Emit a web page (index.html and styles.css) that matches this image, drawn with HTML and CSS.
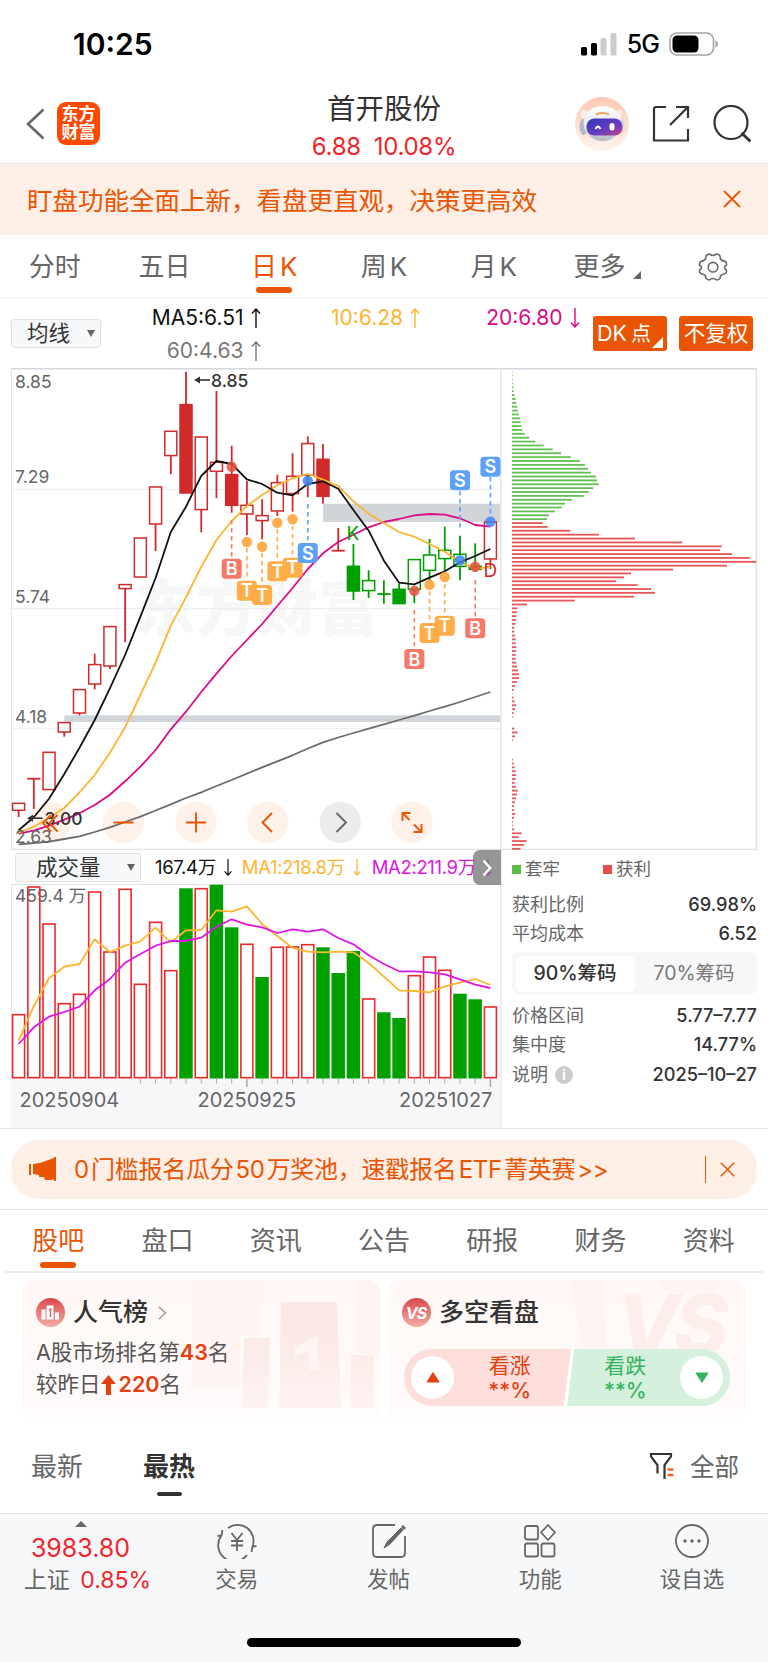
FILE: index.html
```html
<!DOCTYPE html>
<html lang="zh-CN">
<head>
  <meta charset="UTF-8">
  <title>首开股份</title>
  <link rel="stylesheet" href="styles.css">
</head>
<body>
  <svg width="0" height="0" class="defs">
    <symbol id="up" viewBox="0 0 10 20"><path d="M5 20V1M1 5.5L5 1l4 4.5" fill="none" stroke="currentColor" stroke-width="1.4"/></symbol>
    <symbol id="down" viewBox="0 0 10 20"><path d="M5 0v19M1 14.5L5 19l4-4.5" fill="none" stroke="currentColor" stroke-width="1.4"/></symbol>
    <symbol id="close" viewBox="0 0 18 18"><path d="M1 1l16 16M17 1L1 17" fill="none" stroke="currentColor" stroke-width="1.8"/></symbol>
  </svg>

  <div class="status">
    <span class="time">10:25</span>
    <div class="signal">
      <svg width="36" height="23" viewBox="0 0 36 23">
        <rect x="0" y="14" width="6" height="8.5" rx="1.5"/>
        <rect x="10" y="10" width="6" height="12.5" rx="1.5"/>
        <rect x="19.500" y="5" width="6" height="17.500" rx="1.5" fill="#ccc"/>
        <rect x="29.500" y="0" width="6" height="22.500" rx="1.5" fill="#ccc"/>
      </svg>
      <span class="net">5G</span>
      <svg width="50" height="24" viewBox="0 0 50 24">
        <rect x="1" y="1" width="43.500" height="22" rx="7" fill="none" stroke="#a5a5a5" stroke-width="1.6"/>
        <rect x="3.500" y="3.500" width="26" height="17" rx="4.500"/>
        <path d="M46.500 8q2.500 1.500 2.500 4t-2.500 4z" fill="#a5a5a5"/>
      </svg>
    </div>
  </div>

  <div class="header">
    <div class="header-left">
      <svg width="19" height="32" viewBox="0 0 19 32"><path d="M17.500 1.500L2 16l15.500 14.500" fill="none" stroke="#666" stroke-width="2.600"/></svg>
      <div class="logo">东方<br>财富</div>
    </div>
    <div class="stock">
      <div class="name">首开股份</div>
      <div class="price"><span>6.88</span><span>10.08%</span></div>
    </div>
    <div class="header-right">
      <svg width="54" height="54" viewBox="0 0 54 54">
        <defs>
          <linearGradient id="rb" x1="0" y1="0" x2="0" y2="1"><stop offset="0" stop-color="#fdc9b2"/><stop offset="1" stop-color="#fff3ec"/></linearGradient>
          <linearGradient id="rf" x1="0" y1="0" x2="1" y2="1"><stop offset="0" stop-color="#2b3bb5"/><stop offset=".6" stop-color="#6a3cc0"/><stop offset="1" stop-color="#d0407a"/></linearGradient>
          <linearGradient id="rh" x1="0" y1="0" x2="0" y2="1"><stop offset="0" stop-color="#fff"/><stop offset=".6" stop-color="#e6e6ec"/><stop offset="1" stop-color="#b4b8c6"/></linearGradient>
        </defs>
        <circle cx="27" cy="27" r="27" fill="url(#rb)"/>
        <path d="M7.500 12q-3 5 1 10l7-8q-6 1-8-2zM45.500 12q3 5-1 10l-7-8q6 1 8-2z" fill="#f6efed"/>
        <ellipse cx="8.500" cy="30" rx="4" ry="8" fill="#b3b7c6"/>
        <ellipse cx="46" cy="29" rx="3.500" ry="7" fill="#d5d7e0"/>
        <ellipse cx="27.500" cy="26.500" rx="19" ry="17.500" fill="url(#rh)"/>
        <path d="M21 17.500q6-3 13 0" fill="none" stroke="#eea468" stroke-width="2.200"/>
        <rect x="11.500" y="21.500" width="36" height="17" rx="8" fill="url(#rf)"/>
        <path d="M20.500 32q2.500-5 5 0" fill="none" stroke="#fff" stroke-width="1.800"/>
        <rect x="34.500" y="26" width="5" height="7.500" rx="2.500" fill="#fff"/>
      </svg>
      <svg width="38" height="38" viewBox="0 0 38 38"><path d="M14 2H4q-2 0-2 2v31.500h34V24M24 2h12v11M36 2L18 20" fill="none" stroke="#333" stroke-width="2.200"/></svg>
      <svg width="38" height="38" viewBox="0 0 38 38"><circle cx="18" cy="17.500" r="16.500" fill="none" stroke="#333" stroke-width="2.200"/><path d="M28.500 28l9 8.500" stroke="#333" stroke-width="2.800"/></svg>
    </div>
  </div>

  <div class="notice">
    <span>盯盘功能全面上新，看盘更直观，决策更高效</span>
    <svg width="18" height="18"><use href="#close"/></svg>
  </div>

  <div class="tabs period">
    <div>分时</div>
    <div>五日</div>
    <div class="active">日<b>K</b></div>
    <div>周<b>K</b></div>
    <div>月<b>K</b></div>
    <div>更多<i class="corner"></i></div>
    <div>
      <svg width="30" height="28" viewBox="0 0 30 28"><path d="M8 3q1.500-2 3.500-2 2 1.500 3.500 1.500T18.500 1Q20.500 1 22 3q0 3 1.500 4T27.500 8.500q1.200 1.500 1 3.500-2 1-2 2.500t2 2.500q.2 2-1 3.500-2.500.5-4 1.500T22 25.500q-1.500 1.500-3.500 1.500-1.500-1.500-3.500-1.500T11.500 27Q9.500 27 8 25.500 8 23 6.500 22t-4-1.500q-1.200-1.500-1-3.500 2-1 2-2.500t-2-2.500q-.2-2 1-3.500Q5 8 6.500 7T8 3z" fill="none" stroke="#666" stroke-width="1.600"/><circle cx="15" cy="14.200" r="4.800" fill="none" stroke="#666" stroke-width="1.600"/></svg>
    </div>
  </div>

  <div class="ma-row">
    <div class="select ma-select">均线<i></i></div>
    <div class="ma-list">
      <div class="black">MA5:6.51<svg><use href="#up"/></svg></div>
      <div class="orange">10:6.28<svg><use href="#up"/></svg></div>
      <div class="pink">20:6.80<svg><use href="#down"/></svg></div>
      <div class="gray">60:4.63<svg><use href="#up"/></svg></div>
    </div>
    <div class="btn dk">DK<b>点</b></div>
    <div class="btn">不复权</div>
  </div>

  <div class="charts">
    <div class="left">
      <svg id="kline" width="490" height="482" viewBox="11 368 490 482"></svg>
      <div class="vol-head">
        <div class="select vol-select">成交量<i></i></div>
        <div class="black">167.4万<svg><use href="#down"/></svg></div>
        <div class="orange">MA1:218.8万<svg><use href="#down"/></svg></div>
        <div class="purple">MA2:211.9万<svg><use href="#down"/></svg></div>
        <div class="expand"><svg width="10" height="18" viewBox="0 0 10 18"><path d="M1.500 1.500L8 9l-6.500 7.500" fill="none" stroke="#fff" stroke-width="2.600"/></svg></div>
      </div>
      <svg id="volume" width="490" height="244" viewBox="11 884 490 244"></svg>
    </div>
    <div class="right">
      <svg id="chips" width="256" height="482" viewBox="501 368 256 482"></svg>
      <div class="legend"><span class="g">套牢</span><span class="r">获利</span></div>
      <div class="row"><span>获利比例</span><b>69.98%</b></div>
      <div class="row"><span>平均成本</span><b>6.52</b></div>
      <div class="switch"><div class="on">90%筹码</div><div>70%筹码</div></div>
      <div class="row"><span>价格区间</span><b>5.77–7.77</b></div>
      <div class="row"><span>集中度</span><b>14.77%</b></div>
      <div class="row last"><span>说明<i class="info">i</i></span><b>2025–10–27</b></div>
    </div>
  </div>

  <div class="promo-wrap">
    <div class="promo">
      <svg width="27" height="24" viewBox="0 0 27 24"><path d="M0 7h2v11H0zM4 7l7-1L25 1V0h2v24h-2v-1l-2-1v1h-7l-1-3H10v-2l-6-1z" fill="#ea5504"/></svg>
      <span>0<i>门槛报名瓜分</i>50<i>万奖池，速戳报名</i>ETF<i>菁英赛</i>&gt;&gt;</span>
      <div class="bar"></div>
      <svg width="15" height="15"><use href="#close"/></svg>
    </div>
  </div>

  <div class="tabs info-tabs">
    <div class="active">股吧</div>
    <div>盘口</div>
    <div>资讯</div>
    <div>公告</div>
    <div>研报</div>
    <div>财务</div>
    <div>资料</div>
  </div>

  <div class="cards">
    <div class="card">
      <svg class="card-bg" width="190" height="143" viewBox="0 0 190 143">
        <defs><linearGradient id="fade" x1="0" y1="0" x2="0" y2="143" gradientUnits="userSpaceOnUse"><stop offset="0" stop-color="#fbe7e4"/><stop offset=".45" stop-color="#fceae7"/><stop offset="1" stop-color="#fef5f4"/></linearGradient></defs>
        <path d="M2 0h73v22H70v34H50v50H2zM165 0h25v74h-25z" fill="#fef4f2"/>
        <path d="M54 58h26l-2 70H52zM91 22h56l4 106H89zM161 75h23v53h-23z" fill="url(#fade)"/>
        <path d="M105 67l23-11v34h-9V70l-14 7z" fill="#fff6f4"/>
      </svg>
      <div class="card-title">
        <svg width="29" height="29" viewBox="0 0 29 29">
          <defs><linearGradient id="ic" x1="0" y1="0" x2="0" y2="1"><stop offset="0" stop-color="#d9494b"/><stop offset="1" stop-color="#f4aca6"/></linearGradient></defs>
          <circle cx="14.500" cy="14.500" r="14.500" fill="url(#ic)"/>
          <path d="M5.500 11.500h4v10h-4zM10.500 7.500h7v14h-7zM19 14.500h4v7h-4z" fill="#fff"/>
          <path d="M13 12l1.500-1v8" fill="none" stroke="#dc6665" stroke-width="1.500"/>
        </svg>
        <span>人气榜</span>
        <svg width="9" height="14" viewBox="0 0 9 14"><path d="M1 1l6.500 6L1 13" fill="none" stroke="#999" stroke-width="1.400"/></svg>
      </div>
      <p>A股市场排名第<b>43</b>名</p>
      <p>较昨日<svg width="15" height="20" viewBox="0 0 15 20"><path d="M7.500 0L15 9h-5v11H5V9H0z" fill="#e2410f"/></svg><b>220</b>名</p>
    </div>
    <div class="card">
      <svg class="card-bg" width="180" height="143" viewBox="0 0 180 143">
        <path d="M4 0h33l4 68H16zM90 0h66l-8 12h-46z" fill="#fef4f2"/>
        <text x="50" y="74" class="vs-bg">VS</text>
      </svg>
      <div class="card-title">
        <svg width="29" height="29" viewBox="0 0 29 29"><circle cx="14.500" cy="14.500" r="14.500" fill="url(#ic)"/><text x="14" y="20.500" class="vs">VS</text></svg>
        <span>多空看盘</span>
      </div>
      <div class="vote">
        <div class="bull"><i><svg width="14" height="11" viewBox="0 0 14 11"><path d="M7 0.500L13 10H1z" fill="#e2410f" stroke="#e2410f" stroke-linejoin="round"/></svg></i><span>看涨<br><b>**%</b></span></div>
        <div class="bear"><span>看跌<br><b>**%</b></span><i><svg width="14" height="11" viewBox="0 0 14 11"><path d="M7 10.500L13 1H1z" fill="#36b35f" stroke="#36b35f" stroke-linejoin="round"/></svg></i></div>
      </div>
    </div>
  </div>

  <div class="sort">
    <span>最新</span>
    <span class="active">最热</span>
    <div class="filter">
      <svg width="26" height="28" viewBox="0 0 26 28"><path d="M8.500 21.500V13L2 4.500V2h20v2.500L15.500 13v14" fill="none" stroke="#333" stroke-width="2.200"/><path d="M18.500 17.500h6M18.500 23h6" stroke="#f2642a" stroke-width="2.600"/></svg>
      全部
    </div>
  </div>

  <div class="bottom">
    <div class="nav">
      <div class="index">
        <i></i>
        <div class="point">3983.80</div>
        <div class="sh">上证 <span>0.85%</span></div>
      </div>
      <div class="item">
        <svg width="40" height="36" viewBox="0 0 40 36" fill="none" stroke="#666" stroke-width="1.800"><path d="M11 5A16 16 0 0 1 35.500 23.500M34.500 29l1-5.500 4-.5M30 32A16 16 0 0 1 4.500 12.500M5.500 7l-1 5.500-4 .5"/><path d="M14.500 10l5.500 7 5.500-7M20 17v11M14 18h12M14 22.500h12"/></svg>
        交易
      </div>
      <div class="item">
        <svg width="36" height="36" viewBox="0 0 36 36" fill="none" stroke="#666" stroke-width="1.800"><path d="M24 2H6q-4 0-4 4v24q0 4 4 4h24q4 0 4-4V13"/><path d="M13 25l3-6L30 5l2 2-13.500 14.500z" fill="#666" stroke-width="1"/><path d="M31.500 5.500l2-2" stroke-width="4"/></svg>
        发帖
      </div>
      <div class="item">
        <svg width="34" height="36" viewBox="0 0 34 36" fill="none" stroke="#666" stroke-width="1.800"><rect x="2" y="3" width="13" height="13.500" rx="2"/><rect x="2" y="20.500" width="13" height="13" rx="2"/><rect x="18.500" y="20.500" width="13" height="13" rx="2"/><path d="M25 2l7 7.500-7 7.500L18 9.500z" stroke-linejoin="round"/></svg>
        功能
      </div>
      <div class="item">
        <svg width="36" height="36" viewBox="0 0 36 36"><circle cx="18" cy="18" r="16" fill="none" stroke="#666" stroke-width="1.800"/><circle cx="11" cy="18" r="1.700" fill="#666"/><circle cx="18" cy="18" r="1.700" fill="#666"/><circle cx="25" cy="18" r="1.700" fill="#666"/></svg>
        设自选
      </div>
    </div>
    <div class="home"></div>
  </div>

  <script src="chart.js"></script>
</body>
</html>
```

FILE: styles.css
```css
* {
  box-sizing: border-box;
}

body {
  margin: 0;
  width: 768px;
  background: #fff;
  color: #333;
  font-family: Inter, "Noto Sans CJK SC", sans-serif;
  line-height: 1;
}

svg {
  display: block;
  flex: none;
}

.defs {
  position: absolute;
}

i {
  font-style: normal;
}

/* status bar */
.status {
  height: 88px;
  padding: 0 49px 0 73px;
  display: flex;
  align-items: center;
  justify-content: space-between;
  color: #000;
}

.time {
  font-size: 30px;
  font-weight: 600;
}

.signal {
  display: flex;
  align-items: center;
  gap: 10px;
}

.net {
  font-size: 25px;
  font-weight: 500;
  letter-spacing: -1px;
}

/* header */
.header {
  height: 76px;
  padding: 0 17px 0 26px;
  display: grid;
  grid-template-columns: 1fr auto 1fr;
  align-items: center;
  border-bottom: 1px solid #e8e8ea;
}

.header-left {
  display: flex;
  align-items: center;
  gap: 12px;
  padding-bottom: 4px;
}

.logo {
  width: 43px;
  height: 43px;
  border-radius: 9px;
  background: #ff4800;
  color: #fff;
  font-size: 17px;
  font-weight: 700;
  line-height: 18px;
  text-align: center;
  padding-top: 3px;
}

.stock {
  text-align: center;
  margin-left: -9px;
}

.name {
  font-size: 28.500px;
  line-height: 38px;
}

.price {
  display: flex;
  gap: 13px;
  margin-top: 4px;
  font-size: 24px;
  line-height: 30px;
  letter-spacing: -0.3px;
  color: #f4242a;
}

.header-right {
  display: flex;
  align-items: center;
  justify-content: flex-end;
  gap: 23px;
  padding-bottom: 4px;
}

/* notice */
.notice {
  height: 71px;
  padding: 2px 27px 0 27px;
  display: flex;
  align-items: center;
  justify-content: space-between;
  background: #fdeee6;
  color: #ea5504;
  font-size: 25.500px;
}

.notice svg {
  margin-top: -4px;
}

/* tabs */
.tabs {
  display: grid;
  grid-template-columns: repeat(7, 1fr);
  font-size: 26px;
  color: #666;
}

.tabs > div {
  position: relative;
  display: flex;
  align-items: center;
  justify-content: center;
}

.tabs b {
  margin-left: 3px;
  font-weight: 400;
}

.tabs .active {
  color: #ea5504;
}

.tabs .active::after {
  content: "";
  position: absolute;
  bottom: 4px;
  width: 36px;
  height: 6px;
  border-radius: 3px;
  background: #ea5504;
}

.period {
  height: 63px;
  border-bottom: 1px solid #efeff1;
}

.period > div {
  padding-top: 1px;
}

.corner {
  width: 0;
  height: 0;
  margin: 17px -8px 0 8px;
  border-left: 8px solid transparent;
  border-bottom: 8px solid #666;
}

/* ma row */
.ma-row {
  height: 70px;
  padding: 0 15px 0 11px;
  display: flex;
}

.select {
  display: flex;
  align-items: center;
  background: #f7f8fa;
  border: 1px solid #dfe1e6;
  border-radius: 3px;
  font-size: 21.500px;
}

.select i {
  margin-left: auto;
  border-left: 4.500px solid transparent;
  border-right: 4.500px solid transparent;
  border-top: 7px solid #666;
}

.ma-select {
  width: 90px;
  height: 29px;
  margin-top: 21px;
  padding: 0 5px 0 15px;
}

.ma-list {
  width: 480px;
  margin-right: 12px;
  padding-top: 3px;
  display: grid;
  grid-template-columns: repeat(3, 159.500px);
  grid-auto-rows: 33px;
  font-size: 21px;
}

.ma-list div,
.vol-head div {
  display: flex;
  align-items: center;
}

.ma-list div {
  justify-content: flex-end;
}

.ma-list svg,
.vol-head div:not(.expand) svg {
  width: 10px;
  height: 20px;
  margin-left: 7px;
}

.black { color: #111; }
.orange { color: #fdb52f; }
.pink { color: #de0a85; }
.gray { color: #777; }
.purple { color: #e014e4; }

.btn {
  width: 74px;
  height: 35px;
  margin-top: 18px;
  display: flex;
  align-items: center;
  justify-content: center;
  background: #ea5504;
  border-radius: 3px;
  color: #fff;
  font-size: 21.500px;
}

.btn + .btn {
  margin-left: 12px;
}

.dk {
  position: relative;
  justify-content: flex-start;
  padding-left: 4px;
}

.dk b {
  font-weight: 400;
  font-size: 20px;
  margin-left: 4px;
}

.dk::after {
  content: "";
  position: absolute;
  right: 4px;
  bottom: 3px;
  border-left: 11px solid transparent;
  border-bottom: 11px solid #fff;
}

/* charts */
.charts {
  height: 761px;
  padding-left: 11px;
  display: grid;
  grid-template-columns: 490px 256px;
  border-bottom: 1px solid #e3e3e6;
}

.vol-head {
  position: relative;
  height: 34px;
  display: flex;
  align-items: center;
  padding: 1px 0 0 4px;
  font-size: 18.500px;
  letter-spacing: -0.35px;
}

.vol-head div:not(.expand) svg {
  height: 17px;
}

.vol-select.select {
  width: 126px;
  height: 29px;
  margin-right: 14px;
  padding: 0 5px 0 20px;
  letter-spacing: 0;
}

.vol-head .orange {
  margin-left: 9px;
}

.vol-head .purple {
  margin-left: 10px;
}

.vol-head .expand {
  position: absolute;
  right: 0;
  top: 0;
  width: 28px;
  height: 35px;
  justify-content: center;
  background: rgba(110, 110, 110, 0.72);
  border-radius: 7px 0 0 7px;
}

text {
  font-family: Inter, "Noto Sans CJK SC", sans-serif;
}

.axis { font-size: 17.500px; fill: #666; }
.date { font-size: 20px; fill: #666; }
.peak { font-size: 17.500px; font-weight: 500; fill: #333; }
.kd { font-size: 19px; }
.mark { font-size: 18px; font-weight: 600; fill: #fff; text-anchor: middle; }
.watermark { font-size: 61px; font-weight: 900; fill: #f7f7f7; }

.right {
  border-left: 1px solid #f0f0f2;
}

.right > svg {
  margin-left: -1px;
}

.legend {
  height: 38px;
  padding-left: 10px;
  display: flex;
  align-items: center;
  font-size: 17.500px;
  color: #666;
}

.legend span {
  display: flex;
  align-items: center;
  width: 91px;
}

.legend span::before {
  content: "";
  width: 9px;
  height: 9px;
  margin-right: 4px;
  background: #59bd45;
}

.legend .r::before {
  background: #e94b4b;
}

.row {
  height: 29px;
  padding: 0 0 0 10px;
  display: flex;
  align-items: center;
  justify-content: space-between;
  font-size: 18px;
  color: #666;
}

.legend + .row {
  margin-top: 2px;
}

.row b {
  font-weight: 500;
  font-size: 18.200px;
  color: #333;
}

.row span {
  display: flex;
  align-items: center;
}

.row.last {
  height: 31px;
}

.info {
  width: 18px;
  height: 18px;
  margin-left: 7px;
  border-radius: 9px;
  background: #ccc;
  color: #fff;
  font-size: 14px;
  font-weight: 700;
  line-height: 18px;
  text-align: center;
}

.switch {
  height: 43px;
  margin: 4px 0 6px 10px;
  padding: 3.500px;
  display: grid;
  grid-template-columns: 119px 1fr;
  background: #f7f7fa;
  border-radius: 8px;
  font-size: 19.500px;
  color: #777;
}

.switch div {
  display: flex;
  align-items: center;
  justify-content: center;
}

.switch .on {
  background: #fff;
  border-radius: 6px;
  color: #333;
  font-weight: 500;
}

/* promo */
.promo-wrap {
  height: 81px;
  padding: 10.500px 11px 0;
  border-bottom: 1px solid #e6e6e8;
}

.promo {
  height: 59px;
  padding: 0 22px 0 18px;
  display: flex;
  align-items: center;
  background: #fdeee6;
  border-radius: 28px;
  color: #ea5504;
  font-size: 24px;
}

.promo span {
  margin-left: 18px;
  padding-top: 1px;
  letter-spacing: -0.25px;
}

.promo i {
  margin: 0 2px;
}

.bar {
  width: 1.500px;
  height: 27px;
  margin: 0 14px 0 auto;
  background: #ea5504;
}

.info-tabs {
  height: 63px;
  margin: 0 5px;
  border-bottom: 2px solid #ececee;
}

.info-tabs > div {
  padding-top: 1px;
}

.info-tabs .active {
  left: -1px;
}

.info-tabs .active::after {
  bottom: 3px;
}

/* cards */
.cards {
  padding: 7px 22px 0;
  display: grid;
  grid-template-columns: 1fr 1fr;
  gap: 8px;
}

.card {
  position: relative;
  height: 143px;
  padding: 17px 14px 0;
  border-radius: 12px;
  overflow: hidden;
  background: linear-gradient(#fff8f6, #fffafa 80%, #fffdfd);
}

.card > * {
  position: relative;
}

.card .card-bg {
  position: absolute;
  right: 0;
  top: 0;
}

.card-title {
  display: flex;
  align-items: center;
  height: 31px;
  font-size: 25px;
  font-weight: 500;
}

.card-title span {
  margin: 0 10px 0 8px;
}

.card p {
  display: flex;
  align-items: center;
  height: 32px;
  margin: 0;
  font-size: 21.500px;
  color: #555;
}

.card-title + p {
  margin-top: 9px;
}

.card p b {
  color: #e2410f;
  font-weight: 600;
}

.card p svg {
  margin-right: 3px;
}

.vs {
  fill: #fff;
  font-size: 16px;
  font-weight: 700;
  font-style: italic;
  letter-spacing: -1px;
  text-anchor: middle;
}

.vs-bg {
  fill: #fdeeeb;
  font-size: 82px;
  font-weight: 800;
  font-style: italic;
  letter-spacing: -5px;
}

.vote {
  display: flex;
  width: 326px;
  height: 57px;
  margin: 21px 0 0 2px;
  border-radius: 28.500px;
  overflow: hidden;
  background: linear-gradient(97deg, #fddedb 50%, #fff 50.2%, #fff 51%, #d5f0dd 51.2%);
  font-size: 21px;
  line-height: 25px;
  text-align: center;
  color: #e2410f;
}

.vote > div {
  flex: 1;
  display: flex;
  align-items: center;
  justify-content: space-between;
  padding: 0 7px;
}

.vote b {
  font-weight: 500;
}

.vote span {
  padding-top: 1px;
}

.vote i {
  width: 43px;
  height: 43px;
  border-radius: 50%;
  background: #fff;
  display: flex;
  align-items: center;
  justify-content: center;
}

.bull span {
  margin-right: 29px;
}

.bear {
  color: #36b35f;
}

.bear span {
  margin-left: 30px;
}

/* sort */
.sort {
  height: 90px;
  padding: 0 29px 2px 31px;
  display: flex;
  align-items: center;
  gap: 60px;
  font-size: 26px;
  color: #666;
}

.sort .active {
  position: relative;
  color: #333;
  font-weight: 700;
}

.sort .active::after {
  content: "";
  position: absolute;
  left: 14px;
  bottom: -16px;
  width: 25px;
  height: 4px;
  border-radius: 2px;
  background: #333;
}

.filter {
  margin-left: auto;
  display: flex;
  align-items: center;
  gap: 15px;
  font-size: 24.500px;
}

.filter svg {
  margin-top: -2px;
}

/* bottom nav */
.bottom {
  height: 149px;
  padding-top: 7px;
  background: #f7f8fa;
  border-top: 1px solid #dfe1e4;
}

.nav {
  height: 80px;
  display: grid;
  grid-template-columns: 161px repeat(4, 151.700px);
  font-size: 21.500px;
  color: #666;
}

.index {
  text-align: center;
  font-size: 23px;
}

.index i {
  display: block;
  width: 12px;
  margin: 0 auto;
  border-left: 6px solid transparent;
  border-right: 6px solid transparent;
  border-bottom: 6px solid #666;
}

.index .point {
  margin: 9px 0 8px;
  font-size: 25px;
  color: #f4242a;
}

.index .sh {
  padding-left: 14px;
  white-space: nowrap;
}

.index span {
  margin-left: 4px;
  color: #f4242a;
}

.item {
  display: flex;
  flex-direction: column;
  align-items: center;
  gap: 10px;
  padding-top: 2px;
}

.home {
  width: 274px;
  height: 9px;
  margin: 37px auto 0;
  border-radius: 5px;
  background: #000;
}
```

FILE: chart.js
```js
const RED = '#d02a2a';
const GREEN = '#00a000';
const STEP = 15.22;
const cx = i => 18.6 + i * STEP;

// [body top, body bottom, high, low, type] - r/g hollow, R/G filled
const candles = [
  [803, 810, 803, 817, 'r'], [778.7, 778.7, 778.7, 809, 'r'], [752, 789.3, 752, 789.3, 'r'],
  [722.3, 731.7, 722.3, 736.7, 'r'], [689.3, 712.7, 689.3, 715.3, 'r'], [664.3, 683.7, 653.7, 689.3, 'r'],
  [626.3, 665.7, 626.3, 669, 'r'], [584.3, 588.3, 584.3, 642.3, 'r'], [537.7, 576.7, 537.7, 576.7, 'r'],
  [486.7, 523.7, 486.7, 551, 'r'], [431, 455.3, 431, 474.3, 'r'], [404.3, 492.7, 371.7, 492.7, 'R'],
  [436.7, 509.3, 436.7, 532.3, 'r'], [462, 471, 391, 498.3, 'r'], [474.3, 505, 445.7, 512.7, 'R'],
  [505, 513.7, 481, 535, 'r'], [515.3, 520.3, 499.3, 539.3, 'r'], [482.3, 510.7, 474.7, 516, 'r'],
  [476, 493.3, 453.3, 511.7, 'r'], [443.3, 475, 436.3, 497.3, 'r'], [459, 496, 444, 503.7, 'R'],
  [550.7, 550.7, 528, 550.7, 'r'], [566, 590.7, 544, 600, 'G'], [580.3, 590.3, 570.3, 598, 'g'],
  [594, 594, 580.3, 603.7, 'g'], [589, 603.3, 583.3, 603.3, 'G'], [559.3, 589, 559.3, 603.3, 'g'],
  [554.7, 570, 539, 580, 'g'], [550, 558.3, 526.7, 571.7, 'g'], [554, 566, 535.7, 580.3, 'g'],
  [566, 569, 543.3, 572, 'G'], [521.7, 558.7, 521.7, 569, 'r']
];

const ma5 = [830.3, 817.3, 798.7, 774, 747.7, 720, 688.3, 655, 616.7, 578, 532, 506.7, 476, 461, 464, 479.3, 484, 492.7, 495.3, 484, 481.3, 488.7, 510, 530.7, 560.7, 582.7, 584.3, 577.7, 571.3, 562.3, 556, 549];
const ma10 = [832.7, 826.7, 817.7, 808, 792.3, 775, 752.7, 727.3, 695, 662.7, 625.7, 597.3, 567, 540, 521, 506, 495, 485.3, 478.3, 474, 479.7, 486, 501.3, 513.7, 523, 532, 536.7, 544, 551.7, 561.7, 569, 566.7];
const ma20 = [833.7, 830.7, 825.7, 819.7, 813.3, 805, 794.7, 781.3, 766.7, 750, 729.3, 711.7, 692, 673.7, 656, 640, 624, 606, 588, 569, 553.3, 542, 534.7, 527.3, 522, 519, 515.3, 514, 514.7, 518.3, 525, 526.7];
const ma60 = [844.3, 843, 841.7, 839, 836.3, 832, 827.3, 822, 816.7, 810.5, 804.3, 798, 792.3, 786, 780, 773.7, 767.3, 761.3, 755.3, 748.5, 742.3, 737.5, 733, 728.7, 724.3, 720, 715.7, 711, 706.7, 702, 697, 692];

const volumes = [1014.7, 887, 924, 1003.7, 994.3, 892, 952, 889.3, 984.3, 922.3, 970.7, 888.3, 888.7, 884.7, 927.3, 944.3, 977, 947.3, 947, 944.7, 947.3, 973, 951, 999, 1012.3, 1018, 975.7, 957, 970.3, 993.7, 999.3, 1007];
const falling = [11, 13, 14, 16, 20, 21, 22, 24, 25, 29, 30];
const vma1 = [1040.7, 1006, 978.3, 966.7, 964, 939.3, 952, 945.7, 941.3, 927.7, 942.3, 930.3, 930, 910.3, 911.7, 906.3, 924, 936, 948, 951.7, 952.3, 951.7, 952.3, 963, 976.7, 990.3, 991, 992.3, 986.3, 982.7, 979, 985];
const vma2 = [1044, 1027.3, 1016.7, 1012, 1006.7, 990.3, 979, 962.7, 954, 945.7, 941, 941, 937.7, 926.7, 919.3, 924.7, 927.3, 933, 929.3, 931.7, 929.3, 938, 944.3, 955.3, 964, 971.3, 971.3, 972.3, 974.3, 979.3, 984.7, 988];

function line(x1, y1, x2, y2, color, w, extra) {
  return `<line x1="${x1}" y1="${y1}" x2="${x2}" y2="${y2}" stroke="${color}" stroke-width="${w}" ${extra || ''}/>`;
}

function rect(x, y, w, h, fill, extra) {
  return `<rect x="${x}" y="${y}" width="${w}" height="${h}" fill="${fill}" ${extra || ''}/>`;
}

function curve(data, color) {
  const pts = data.map((y, i) => cx(i).toFixed(1) + ',' + y).join(' ');
  return `<polyline points="${pts}" fill="none" stroke="${color}" stroke-width="1.8" stroke-linejoin="round"/>`;
}

function text(x, y, cls, str, fill) {
  return `<text x="${x}" y="${y}" class="${cls}" ${fill ? `style="fill:${fill}"` : ''}>${str}</text>`;
}

function drawKline() {
  let s = text(135, 631, 'watermark', '东方财富');
  [489.3, 608.7, 728.3].forEach(y => s += line(11, y, 501, y, '#e9ebf0', 1));
  s += rect(323, 503.7, 178, 18.3, '#d1d5da');
  s += rect(64.3, 715.3, 437, 6.7, '#d1d5da');
  s += line(11, 368.8, 501, 368.8, '#d3d8de', 1.4);
  s += line(11.5, 368, 11.5, 850, '#e3e5ea', 1);
  s += line(500.5, 368, 500.5, 850, '#e3e5ea', 1);
  s += line(11, 849.3, 501, 849.3, '#dfe1e6', 1.2);

  // round control buttons
  [50.5, 123.5, 196, 267.7, 340.3, 412].forEach((x, i) => {
    s += `<circle cx="${x}" cy="822.4" r="20.7" fill="${i == 4 ? '#ececec' : '#fef1ea'}"/>`;
  });

  candles.forEach(([top, bottom, high, low, type], i) => {
    const color = type.toLowerCase() == 'r' ? RED : GREEN;
    const x = cx(i);
    if (high < top) s += line(x, high, x, top, color, 1.8);
    if (low > bottom) s += line(x, bottom, x, low, color, 1.8);
    if (top == bottom) {
      s += line(x - 6.6, top, x + 6.6, top, color, 1.8);
    } else {
      const hollow = type == 'r' || type == 'g';
      s += rect(x - 6, top + 0.3, 12, bottom - top, hollow ? 'none' : color, `stroke="${color}" stroke-width="1.5"`);
    }
  });

  s += curve(ma60, '#6b6b6b') + curve(ma20, '#de0a85') + curve(ma10, '#fdb52f') + curve(ma5, '#111');

  s += text(15, 387.7, 'axis', '8.85') + text(15, 483, 'axis', '7.29') + text(15, 602.7, 'axis', '5.74');
  s += text(15, 722.7, 'axis', '4.18') + text(15, 842.7, 'axis', '2.63');
  s += text(211, 386.5, 'peak', '8.85') + text(44.5, 825, 'peak', '3.00');
  s += line(197, 380, 210, 380, '#333', 1.6) + '<path d="M194 380l6-3.500v7z" fill="#333"/>';
  s += line(30, 818.2, 42.500, 818.2, '#333', 1.6) + '<path d="M27 818.200l6-3.500v7z" fill="#333"/>';
  s += text(346.5, 540, 'kd', 'K', GREEN) + text(483.5, 576.5, 'kd', 'D', RED);

  // signals: [candle, dot y, badge y, dash start, dash end, letter]
  const colors = { B: '#f8786a', T: '#ffad49', S: '#5ea1fb' };
  const dots = { B: '#e8503f', T: '#ffa030', S: '#3a85f0' };
  [
    [14, 466.7, 568.7, 520, 558, 'B'], [15, 542, 590.7, 548, 580, 'T'], [16, 546.7, 595, 553, 585, 'T'],
    [17, 522.7, 571.3, 529, 561, 'T'], [18, 519.3, 567.7, 526, 557, 'T'], [19, 480.7, 553, 504, 542, 'S'],
    [26, 590.7, 659, 610, 648, 'B'], [27, 584.7, 633, 591, 622, 'T'], [28, 577, 625.7, 584, 615, 'T'],
    [29, 560.3, 480.3, 491, 529, 'S'], [30, 566.7, 628.3, 580, 618, 'B'], [31, 521.7, 466.7, 477, 516, 'S']
  ].forEach(([i, dy, by, y1, y2, c]) => {
    const x = cx(i);
    s += line(x, y1, x, y2, colors[c], 1.6, 'stroke-dasharray="4.500 3.500"');
    s += `<circle cx="${x}" cy="${dy}" r="5.200" fill="${dots[c]}" opacity="0.85"/>`;
    s += rect(x - 10, by - 10, 20, 20, colors[c], 'rx="3.500"');
    s += text(x, by + 6.5, 'mark', c);
  });

  s += '<g fill="none" stroke="#ea5504" stroke-width="1.900">' +
    '<path d="M51 815l-8 8 8 8.500M57.500 815l-8 8 8 8.500"/>' +
    '<path d="M113.500 822.500h20M186 822.500h20M196 812.500v20"/>' +
    '<path d="M272 813l-9.500 9.500 9.500 9.500"/>' +
    '<path d="M402.500 821v-8h8M402.500 813l7 7M421.500 824v8h-8M421.500 832l-7.500-7.500"/></g>' +
    '<path d="M336.500 813l9.500 9.500-9.500 9.500" fill="none" stroke="#666" stroke-width="1.900"/>';
  document.getElementById('kline').innerHTML = s;
}

function drawVolume() {
  let s = rect(11, 1078.5, 490, 50, '#f7f7fa');
  s += line(11, 884.5, 501, 884.5, '#dfe1e6', 1) + line(11.5, 884, 11.5, 1079, '#e3e5ea', 1) + line(500.5, 884, 500.5, 1128, '#e9ebf0', 1);
  s += text(15, 902, 'axis', '459.4 万');
  volumes.forEach((y, i) => {
    const x = cx(i);
    if (falling.includes(i)) {
      s += rect(x - 6.8, y, 13.5, 1078.5 - y, GREEN);
    } else {
      s += rect(x - 6, y, 12, 1077.7 - y, 'none', 'stroke="#f0282a" stroke-width="1.600"');
    }
    if (i >= 8) {
      const long = i == 15 || i == 31;
      s += line(x, 1079, x, long ? 1087 : 1083.5, '#aaa', long ? 1.5 : 1);
    }
  });
  s += curve(vma1, '#fdb52f') + curve(vma2, '#e014e4');
  s += text(19.5, 1106.7, 'date', '20250904') + text(197.5, 1106.7, 'date', '20250925') + text(399, 1106.7, 'date', '20251027');
  document.getElementById('volume').innerHTML = s;
}

// chip distribution, one width per price level from top to bottom
const chips = [
  0.4, 0.6, 0.6, 0.8, 1.3, 1.7, 2.7, 3.7, 4.3, 5.3, 6, 7, 8, 8.7, 9.3, 10.3, 12.7, 17.3, 23.3, 31.7, 40.7, 49, 58.7, 67.7, 73, 76, 79, 84, 85, 86.7, 81.3, 76.7, 71.7, 60, 53, 49.7, 42.7, 37, 35,
  30.7, 35.7, 58.3, 87, 123, 170.3, 209.7, 208, 220, 237.7, 244.3, 215, 161, 119, 112, 104, 125.7, 139, 143, 122.3, 62.7, 15, 5.5, 5, 4.3, 4,
  3.3, 2.3, 2.3, 3, 3.7, 3.7, 4.3, 4.3, 3.7, 3.7, 4.3, 5, 6, 7, 7, 5, 3, 1.7, 0.5, 1.7, 2.7, 4, 3, 1.7, 0.8, 0, 0, 2.3, 5.7, 3, 0.8, 0, 0, 0, 0,
  0.8, 1.8, 2.7, 3.7, 4, 3.7, 2.7, 4, 5.7, 5, 4, 3, 2, 2, 3.3, 2, 0.9, 0.9, 2.3, 9.7, 6.5, 14.5, 12, 8.5
];

function drawChips() {
  let s = line(501, 368.8, 757, 368.8, '#d3d8de', 1.4) + line(756.3, 368, 756.3, 850, '#d8dce1', 1.2) + line(501, 849.3, 757, 849.3, '#dfe1e6', 1.2);
  chips.forEach((w, i) => {
    if (w) s += rect(512, 370.9 + i * 3.878, w, 1.8, i < 39 ? '#62c052' : '#ea5657');
  });
  document.getElementById('chips').innerHTML = s;
}

drawKline();
drawVolume();
drawChips();
```
